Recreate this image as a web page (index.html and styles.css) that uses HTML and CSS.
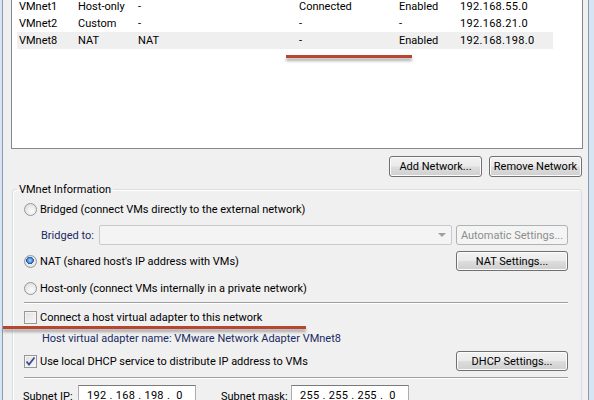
FILE: index.html
```html
<!DOCTYPE html>
<html>
  <head>
    <title>Virtual Network Editor</title>
    <link rel="stylesheet" href="styles.css">
  </head>
  <body>
    <div class="dialog">
      <div class="netlist">
        <div class="net-row">
          <span class="col-name">VMnet1</span>
          <span class="col-type">Host-only</span>
          <span class="col-ext">-</span>
          <span class="col-host">Connected</span>
          <span class="col-dhcp">Enabled</span>
          <span class="col-subnet">192.168.55.0</span>
        </div>
        <div class="net-row">
          <span class="col-name">VMnet2</span>
          <span class="col-type">Custom</span>
          <span class="col-ext">-</span>
          <span class="col-host">-</span>
          <span class="col-dhcp">-</span>
          <span class="col-subnet">192.168.21.0</span>
        </div>
        <div class="net-row selected">
          <span class="col-name">VMnet8</span>
          <span class="col-type">NAT</span>
          <span class="col-ext">NAT</span>
          <span class="col-host">-</span>
          <span class="col-dhcp">Enabled</span>
          <span class="col-subnet">192.168.198.0</span>
        </div>
      </div>

      <div class="list-actions">
        <button class="btn">Add Network...</button>
        <button class="btn">Remove Network</button>
      </div>

      <fieldset class="group">
        <legend>VMnet Information</legend>

        <div class="opt-row">
          <label class="choice"><span class="radio"></span>Bridged (connect VMs directly to the external network)</label>
        </div>
        <div class="opt-row indent">
          <span class="static">Bridged to:</span>
          <div class="combo disabled"><span class="combo-arrow"></span></div>
          <button class="btn wide" disabled>Automatic Settings...</button>
        </div>
        <div class="opt-row">
          <label class="choice"><span class="radio checked"></span>NAT (shared host's IP address with VMs)</label>
          <button class="btn wide">NAT Settings...</button>
        </div>
        <div class="opt-row row-hostonly">
          <label class="choice"><span class="radio"></span>Host-only (connect VMs internally in a private network)</label>
        </div>

        <div class="sep"></div>

        <div class="opt-row row-adapter">
          <label class="choice"><span class="check"></span>Connect a host virtual adapter to this network</label>
        </div>
        <div class="opt-row row-adapter-name">
          <span class="static">Host virtual adapter name: VMware Network Adapter VMnet8</span>
        </div>
        <div class="opt-row row-dhcp">
          <label class="choice"><span class="check checked"><svg width="11" height="11" viewBox="0 0 11 11"><path d="M1.5 5.5 L4 8.5 L9.5 1.5" fill="none" stroke="#3c4f8c" stroke-width="1.8"/></svg></span>Use local DHCP service to distribute IP address to VMs</label>
          <button class="btn wide">DHCP Settings...</button>
        </div>

        <div class="sep sep-low"></div>

        <div class="opt-row row-subnet">
          <span class="static plain ip-label">Subnet IP:</span>
          <div class="ip-box">192 . 168 . 198 .&nbsp; 0</div>
          <span class="static plain mask-label">Subnet mask:</span>
          <div class="ip-box">255 . 255 . 255 .&nbsp; 0</div>
        </div>
      </fieldset>
    </div>

    <div class="mark mark-top"></div>
    <div class="mark mark-adapter"></div>
  </body>
</html>
```

FILE: styles.css
```css
html,
body {
  margin: 0;
  padding: 0;
  height: 100%;
  overflow: hidden;
}

body {
  position: relative;
  background: #d7e4f2;
  font-family: Roboto, "Liberation Sans", sans-serif;
  font-size: 11px;
  color: #000;
}

.dialog {
  box-sizing: border-box;
  width: 587px;
  height: 420px;
  margin-left: 2px;
  margin-top: -6px;
  padding: 0 5px 0 8px;
  background: #f0f0f0;
  border-left: 1px solid #8d9bb0;
  border-right: 1px solid #8d9bb0;
}

/* network table */
.netlist {
  box-sizing: border-box;
  height: 155px;
  padding-top: 3px;
  padding-left: 5px;
  background: #fff;
  border: 1px solid #828790;
  border-top-color: #fff;
}

.net-row {
  display: flex;
  height: 17px;
  line-height: 17px;
  width: 536px;
}

.net-row.selected {
  background: #efefef;
}

.net-row span {
  white-space: nowrap;
}

.col-name { width: 59px; padding-left: 2px; }
.col-type { width: 60px; }
.col-ext { width: 161px; }
.col-host { width: 100px; }
.col-dhcp { width: 61px; }
.col-subnet { flex: 1; letter-spacing: 0.3px; }

.list-actions {
  display: flex;
  justify-content: flex-end;
  gap: 7px;
  margin-top: 7px;
  padding-right: 1px;
}

/* buttons */
.btn {
  box-sizing: border-box;
  width: 93px;
  height: 21px;
  padding: 0;
  font-family: inherit;
  font-size: 11px;
  color: #000;
  white-space: nowrap;
  border: 1px solid #707070;
  border-radius: 3px;
  background: linear-gradient(#f2f2f2 0%, #ebebeb 48%, #dddddd 52%, #cfcfcf 100%);
  box-shadow: inset 0 0 0 1px #fcfcfc;
}

.btn.wide {
  width: 112px;
  height: 20px;
  margin-left: auto;
}

.btn:disabled {
  color: #8d8d8d;
  border-color: #adb2b5;
  background: #f4f4f4;
  box-shadow: none;
}

/* group box */
.group {
  margin: 5px 1px 0 1px;
  padding: 2px 13px 0 11px;
  border: 1px solid #d5dfe5;
  border-radius: 3px;
  box-shadow: inset 1px 1px 0 #fff;
  height: 260px;
}

.group legend {
  margin-left: -7px;
  padding: 0 2px;
  line-height: 15px;
}

.opt-row {
  display: flex;
  align-items: center;
  height: 20px;
  margin-top: 6px;
}

.opt-row:first-of-type {
  margin-top: 0;
}

.choice {
  display: flex;
  align-items: center;
  white-space: nowrap;
}

.static {
  color: #1b2a63;
  white-space: nowrap;
}

.static.plain {
  color: #000;
}

.indent {
  padding-left: 17px;
}

.indent .static {
  width: 58px;
}

.row-hostonly { margin-top: 7px; }
.row-adapter { margin-top: 3px; }
.row-adapter-name { margin-top: 1px; padding-left: 18px; }
.row-dhcp { margin-top: 3px; }
.row-subnet { margin-top: 7px; }

/* radios and checks */
.radio {
  box-sizing: border-box;
  width: 13px;
  height: 13px;
  margin-right: 3px;
  border: 1px solid #979797;
  border-radius: 50%;
  background: radial-gradient(circle at 60% 65%, #fcfcfc 0%, #e8e8e8 55%, #d6d6d6 100%);
}

.radio.checked {
  background:
    radial-gradient(circle at 45% 40%, #b7dcfb 0%, #3a8be0 28%, #1a4f9a 40%, transparent 44%),
    radial-gradient(circle, #f4f4f4 0%, #dedede 100%);
}

.check {
  box-sizing: border-box;
  display: flex;
  align-items: center;
  justify-content: center;
  width: 13px;
  height: 13px;
  margin-right: 3px;
  border: 1px solid #979797;
  background: linear-gradient(135deg, #e0e0e0 0%, #f8f8f8 100%);
  box-shadow: inset 0 0 0 1px #f4f4f4;
}

.check svg {
  display: block;
}

/* combo */
.combo {
  box-sizing: border-box;
  position: relative;
  width: 353px;
  height: 20px;
  border: 1px solid #c6c9ce;
  border-radius: 2px;
  background: #f4f4f4;
}

.combo-arrow {
  position: absolute;
  right: 5px;
  top: 7px;
  border-left: 4px solid transparent;
  border-right: 4px solid transparent;
  border-top: 4px solid #a0a0a0;
}

.sep {
  height: 0;
  margin-top: 4px;
  border-top: 1px solid #a0a0a0;
  border-bottom: 1px solid #fff;
}

.sep-low {
  margin-top: 6px;
}

/* subnet fields */
.ip-label {
  width: 55px;
  margin-left: -1px;
}

.ip-box {
  box-sizing: border-box;
  width: 118px;
  height: 22px;
  padding: 3px 0 0 8px;
  background: #fff;
  border: 1px solid #abadb3;
  border-top-color: #7a7a7a;
  white-space: nowrap;
  letter-spacing: 0.3px;
}

.mask-label {
  width: 70px;
  margin-left: 25px;
}

/* red callout underlines drawn over the screenshot */
.mark {
  position: absolute;
  height: 3px;
  background: #b9442f;
  box-shadow: 0 3px 3px rgba(70, 70, 70, 0.45);
}

.mark-top {
  left: 286px;
  top: 55px;
  width: 126px;
}

.mark-adapter {
  left: 3px;
  top: 326px;
  width: 303px;
}
```
